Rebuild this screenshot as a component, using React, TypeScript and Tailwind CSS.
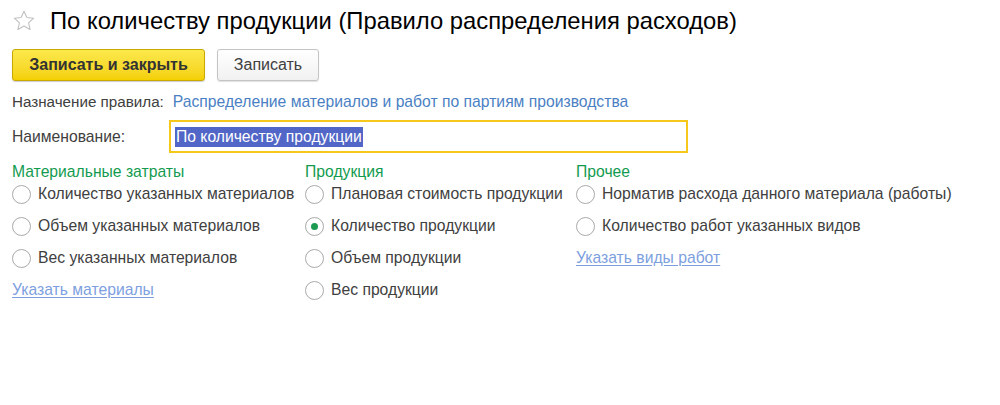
import React from 'react';

type Opt = { label: string; checked?: boolean };

function Radio({ label, checked }: Opt) {
  return (
    <div className="flex h-8 items-center gap-[7px]">
      <span className="flex h-[19px] w-[19px] shrink-0 items-center justify-center rounded-full border border-[#a9a9a9] bg-white">
        {checked && <span className="h-[7px] w-[7px] rounded-full bg-[#1c9a52]" />}
      </span>
      <span className="whitespace-nowrap text-[#404040]">{label}</span>
    </div>
  );
}

function Column({ title, options, link }: { title: string; options: Opt[]; link?: string }) {
  return (
    <div className="flex flex-col">
      <div className="flex h-[12px] items-center whitespace-nowrap text-[#129b4f]">{title}</div>
      {options.map((o) => (
        <Radio key={o.label} {...o} />
      ))}
      {link && (
        <div className="flex h-8 items-center">
          <a className="whitespace-nowrap text-[#7d9fe0] underline underline-offset-2">{link}</a>
        </div>
      )}
    </div>
  );
}

export default function App() {
  return (
    <div
      className="h-[405px] w-[1000px] overflow-hidden bg-white text-[15.7px] text-[#404040]"
      style={{ fontFamily: '"Liberation Sans", Arial, sans-serif' }}
    >
      {/* Title */}
      <div className="flex h-[41px] items-center pl-[12px] pt-[1px]">
        <svg width="24" height="24" viewBox="0 0 24 24" className="shrink-0">
          <path
            d="M12 2.2l2.9 6.3 6.8.7-5.1 4.6 1.5 6.7L12 17.1l-6.1 3.4 1.5-6.7-5.1-4.6 6.8-.7z"
            fill="none"
            stroke="#c0c0c0"
            strokeWidth="1.1"
            strokeLinejoin="round"
          />
        </svg>
        <h1 className="ml-[14px] whitespace-nowrap text-[23.8px] leading-none text-black">
          По количеству продукции (Правило распределения расходов)
        </h1>
      </div>

      {/* Toolbar */}
      <div className="mt-[8px] flex gap-[12px] pl-[12px]">
        <button className="h-[32px] w-[193px] rounded-[3px] border border-[#c9a800] bg-gradient-to-b from-[#fce94a] to-[#f4d000] text-[16px] font-bold text-[#333] shadow-[0_1px_1px_rgba(0,0,0,0.2)]">
          Записать и закрыть
        </button>
        <button className="h-[32px] w-[102px] rounded-[3px] border border-[#c4c4c4] bg-gradient-to-b from-white to-[#f1f1f1] text-[16px] text-[#404040] shadow-[0_1px_1px_rgba(0,0,0,0.12)]">
          Записать
        </button>
      </div>

      {/* Rule purpose */}
      <div className="mt-[11px] flex h-[20px] items-center gap-[9px] pl-[12px] whitespace-nowrap">
        <span className="text-[15.2px]">Назначение правила:</span>
        <a className="text-[#4b7fc4]">Распределение материалов и работ по партиям производства</a>
      </div>

      {/* Name */}
      <div className="mt-[8px] flex items-center pl-[12px]">
        <span className="w-[157px]">Наименование:</span>
        <div className="flex h-[33px] w-[519px] items-center border-2 border-[#f7c81c] pl-[4px]">
          <span className="bg-[#5166c6] px-[1px] leading-[20px] text-white">По количеству продукции</span>
        </div>
      </div>

      {/* Options */}
      <div className="mt-[13px] flex pl-[12px]">
        <div className="w-[293px]">
          <Column
            title="Материальные затраты"
            options={[
              { label: 'Количество указанных материалов' },
              { label: 'Объем указанных материалов' },
              { label: 'Вес указанных материалов' },
            ]}
            link="Указать материалы"
          />
        </div>
        <div className="w-[271px]">
          <Column
            title="Продукция"
            options={[
              { label: 'Плановая стоимость продукции' },
              { label: 'Количество продукции', checked: true },
              { label: 'Объем продукции' },
              { label: 'Вес продукции' },
            ]}
          />
        </div>
        <div>
          <Column
            title="Прочее"
            options={[
              { label: 'Норматив расхода данного материала (работы)' },
              { label: 'Количество работ указанных видов' },
            ]}
            link="Указать виды работ"
          />
        </div>
      </div>
    </div>
  );
}
